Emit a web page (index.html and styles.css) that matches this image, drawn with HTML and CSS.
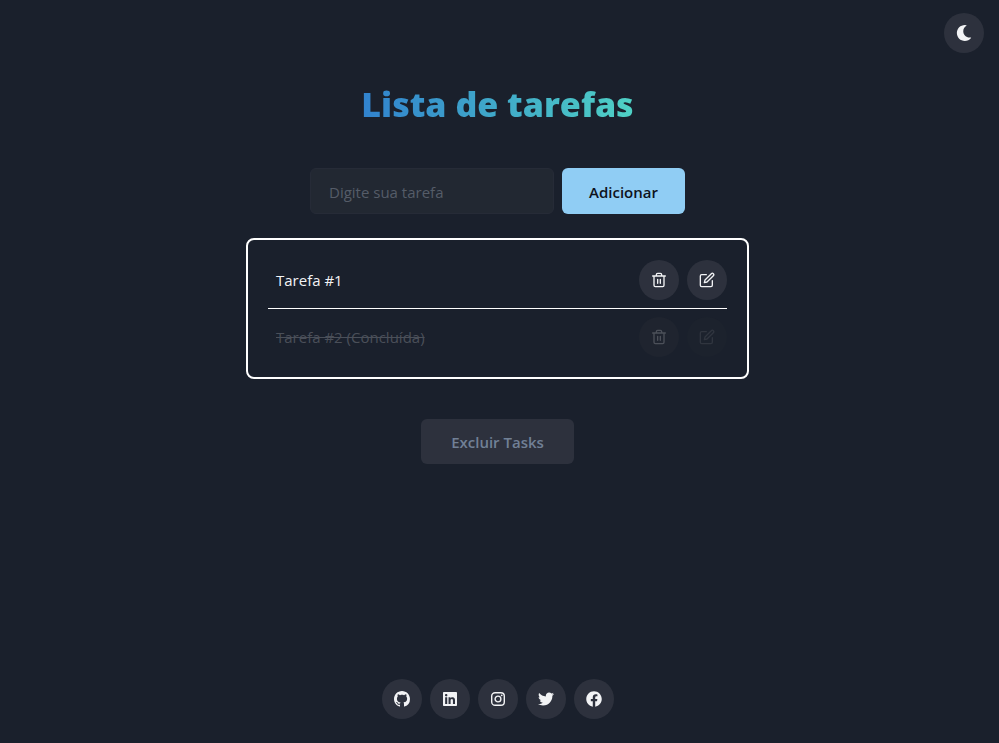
FILE: index.html
```html
<!DOCTYPE html>
<html lang="pt-BR">
<head>
<meta charset="utf-8">
<meta name="viewport" content="width=device-width, initial-scale=1">
<title>Lista de tarefas</title>
<link rel="stylesheet" href="styles.css">
</head>
<body>
<svg class="sprite" aria-hidden="true">
  <symbol id="trash" viewBox="0 0 24 24"><path fill="none" stroke="currentColor" stroke-width="2" stroke-linecap="round" stroke-linejoin="round" d="M2.500 6h19M4.500 6v14a2 2 0 0 0 2 2h11a2 2 0 0 0 2-2V6M8 6V4a2 2 0 0 1 2-2h4a2 2 0 0 1 2 2v2M10 11v6M14 11v6"/></symbol>
  <symbol id="edit" viewBox="0 0 24 24"><path fill="none" stroke="currentColor" stroke-width="2" stroke-linecap="round" stroke-linejoin="round" d="M11 4H4a2 2 0 0 0-2 2v14a2 2 0 0 0 2 2h14a2 2 0 0 0 2-2v-7M18.500 2.500a2.121 2.121 0 0 1 3 3L12 15l-4 1 1-4 9.500-9.500z"/></symbol>
</svg>
<header class="topbar">
  <button class="round" type="button" aria-label="Alternar tema">
    <svg class="icon" viewBox="0 0 512 512"><path fill="currentColor" d="M283.211 512c78.962 0 151.079-35.925 198.857-94.792 7.068-8.708-.639-21.430-11.562-19.350-124.203 23.654-238.262-71.576-238.262-196.954 0-72.222 38.662-138.635 101.498-174.394 9.686-5.512 7.250-20.197-3.756-22.230A258.156 258.156 0 0 0 283.211 0c-141.309 0-256 114.511-256 256 0 141.309 114.511 256 256 256z"/></svg>
  </button>
</header>
<main class="content">
  <h1 class="title">Lista de tarefas</h1>
  <form class="add">
    <input class="field" type="text" placeholder="Digite sua tarefa" aria-label="Digite sua tarefa">
    <button class="primary" type="button">Adicionar</button>
  </form>
  <ul class="card">
    <li class="task">
      <span class="name">Tarefa #1</span>
      <button class="round" type="button" aria-label="Excluir tarefa"><svg class="icon"><use href="#trash"/></svg></button>
      <button class="round" type="button" aria-label="Editar tarefa"><svg class="icon"><use href="#edit"/></svg></button>
    </li>
    <li class="task done">
      <span class="name">Tarefa #2 (Concluída)</span>
      <button class="round" type="button" aria-label="Excluir tarefa"><svg class="icon"><use href="#trash"/></svg></button>
      <button class="round" type="button" aria-label="Editar tarefa" disabled><svg class="icon"><use href="#edit"/></svg></button>
    </li>
  </ul>
  <button class="clear" type="button">Excluir Tasks</button>
</main>
<footer class="social">
  <a class="round" href="#" aria-label="GitHub"><svg class="icon" viewBox="0 0 16 16"><path fill="currentColor" d="M8 0C3.580 0 0 3.580 0 8c0 3.540 2.290 6.530 5.470 7.590.4.070.55-.17.55-.38 0-.19-.01-.82-.01-1.490-2.010.37-2.530-.49-2.690-.94-.09-.23-.48-.94-.82-1.130-.28-.15-.68-.52-.01-.53.63-.01 1.080.58 1.230.82.72 1.210 1.870.87 2.330.66.07-.52.28-.87.51-1.070-1.780-.2-3.640-.89-3.640-3.950 0-.87.31-1.590.82-2.150-.08-.2-.36-1.020.08-2.120 0 0 .67-.21 2.200.82.64-.18 1.320-.27 2-.27s1.360.09 2 .27c1.530-1.040 2.200-.82 2.200-.82.44 1.100.16 1.920.08 2.120.51.56.82 1.270.82 2.150 0 3.070-1.870 3.750-3.650 3.950.29.25.54.73.54 1.480 0 1.070-.01 1.930-.01 2.200 0 .21.15.46.55.38A8.010 8.010 0 0 0 16 8c0-4.420-3.580-8-8-8z"/></svg></a>
  <a class="round" href="#" aria-label="LinkedIn"><svg class="icon" viewBox="0 0 448 512"><path fill="currentColor" d="M416 32H31.900C14.300 32 0 46.500 0 64.300v383.400C0 465.500 14.300 480 31.900 480H416c17.600 0 32-14.500 32-32.300V64.300c0-17.800-14.400-32.300-32-32.300zM135.400 416H69V202.200h66.500V416zm-33.200-243c-21.300 0-38.500-17.300-38.500-38.500S80.900 96 102.200 96c21.200 0 38.500 17.300 38.500 38.500 0 21.300-17.200 38.500-38.500 38.500zm282.100 243h-66.400V312c0-24.800-.5-56.700-34.500-56.700-34.600 0-39.900 27-39.900 54.900V416h-66.400V202.200h63.700v29.200h.9c8.900-16.800 30.600-34.500 62.900-34.500 67.200 0 79.700 44.300 79.700 101.900V416z"/></svg></a>
  <a class="round" href="#" aria-label="Instagram"><svg class="icon" viewBox="0 0 16 16"><rect x="1.700" y="1.700" width="12.600" height="12.600" rx="3.400" fill="none" stroke="currentColor" stroke-width="1.400"/><circle cx="8" cy="8" r="2.900" fill="none" stroke="currentColor" stroke-width="1.400"/><circle cx="11.700" cy="4.300" r=".9" fill="currentColor"/></svg></a>
  <a class="round" href="#" aria-label="Twitter"><svg class="icon" viewBox="0 0 512 512"><path fill="currentColor" d="M459.370 151.716c.325 4.548.325 9.097.325 13.645 0 138.720-105.583 298.558-298.558 298.558-59.452 0-114.680-17.219-161.137-47.106 8.447.974 16.568 1.299 25.340 1.299 49.055 0 94.213-16.568 130.274-44.832-46.132-.975-84.792-31.188-98.112-72.772 6.498.974 12.995 1.624 19.818 1.624 9.421 0 18.843-1.300 27.614-3.573-48.081-9.747-84.143-51.980-84.143-102.985v-1.299c13.969 7.797 30.214 12.670 47.431 13.319-28.264-18.843-46.781-51.005-46.781-87.391 0-19.492 5.197-37.360 14.294-52.954 51.655 63.675 129.300 105.258 216.365 109.807-1.624-7.797-2.599-15.918-2.599-24.040 0-57.828 46.782-104.934 104.934-104.934 30.213 0 57.502 12.670 76.670 33.137 23.715-4.548 46.456-13.320 66.599-25.340-7.798 24.366-24.366 44.833-46.132 57.827 21.117-2.273 41.584-8.122 60.426-16.243-14.292 20.791-32.161 39.308-52.628 54.253z"/></svg></a>
  <a class="round" href="#" aria-label="Facebook"><svg class="icon" viewBox="0 0 512 512"><path fill="currentColor" d="M504 256C504 119 393 8 256 8S8 119 8 256c0 123.780 90.690 226.380 209.250 245V327.690h-63V256h63v-54.640c0-62.150 37-96.480 93.670-96.480 27.140 0 55.520 4.840 55.520 4.840v61h-31.280c-30.800 0-40.410 19.120-40.410 38.730V256h68.780l-11 71.690h-57.780V501C413.310 482.380 504 379.780 504 256z"/></svg></a>
</footer>
</body>
</html>
```
FILE: styles.css
```css
* { box-sizing: border-box; }

body {
  margin: 0;
  min-height: 100vh;
  padding: 13px 3px 24px 0;
  display: flex;
  flex-direction: column;
  background: #1a202c;
  color: #f2f3f5;
  font-family: "Segoe UI", "Open Sans", "Noto Sans", sans-serif;
  font-size: 15px;
  line-height: 24px;
}

button, input { font: inherit; color: inherit; border: 0; padding: 0; }

.sprite { display: none; }

.topbar {
  display: flex;
  justify-content: flex-end;
  padding-right: 12px;
}

.round {
  flex: none;
  display: flex;
  align-items: center;
  justify-content: center;
  width: 40px;
  height: 40px;
  border-radius: 50%;
  background: #2d313d;
  color: #f2f3f5;
}

.icon { width: 16px; height: 16px; }

.content {
  flex: 1;
  display: flex;
  flex-direction: column;
  align-items: center;
  padding: 27px 17px 0 16px;
}

.title {
  margin: 0 0 40px;
  font-size: 34px;
  font-weight: 800;
  line-height: 48px;
  color: transparent;
  background: linear-gradient(to right, #3182ce, #4fd1c5);
  -webkit-background-clip: text;
  background-clip: text;
}

.add {
  display: flex;
  gap: 8px;
  width: 100%;
  max-width: 375px;
  margin-bottom: 24px;
}

.field {
  flex: 1;
  min-width: 0;
  height: 46px;
  padding: 2px 18px 0;
  border: 1px solid #262b37;
  border-radius: 6px;
  background: #222832;
}

.field::placeholder { color: #555c68; opacity: 1; }

.primary {
  width: 123px;
  border-radius: 6px;
  padding-top: 2px;
  background: #90cdf4;
  color: #0e131c;
  font-weight: 600;
}

.card {
  width: 100%;
  max-width: 503px;
  margin: 0 0 40px;
  padding: 20px;
  border: 2px solid #fff;
  border-radius: 8px;
  list-style: none;
}

.task {
  display: flex;
  align-items: center;
  gap: 8px;
}

.task + .task {
  margin-top: 8px;
  padding-top: 8px;
  border-top: 1px solid #fff;
}

.name { flex: 1; padding-left: 8px; }

.done .name { color: #4a4f59; text-decoration: line-through; }

.done .round { background: #1f242f; color: #4c5059; }

.done .round:disabled { background: #1c222d; color: #30353f; }

.clear {
  width: 153px;
  height: 45px;
  border-radius: 6px;
  background: #2d313d;
  color: #718096;
  font-weight: 600;
}

.social {
  display: flex;
  justify-content: center;
  gap: 8px;
}
```
